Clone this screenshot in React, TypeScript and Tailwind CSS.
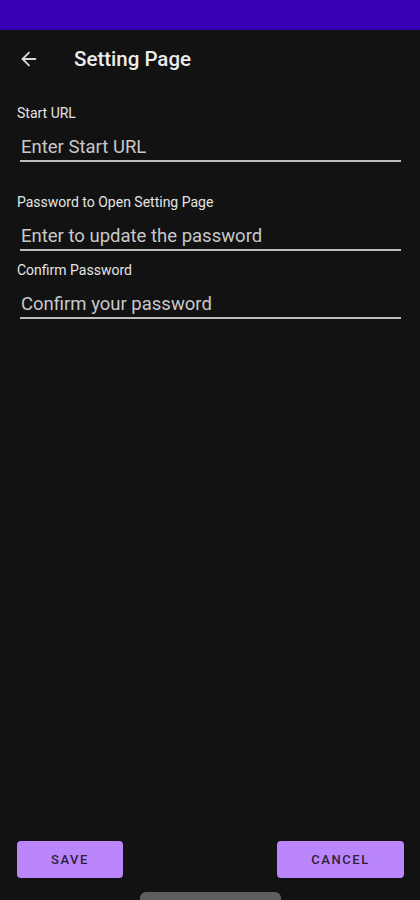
import React, { useState } from 'react'
import { ArrowLeft } from 'lucide-react'

type FieldProps = {
  label: string
  placeholder: string
  value: string
  onChange: (v: string) => void
  gapTop: string
  type?: string
}

const Field: React.FC<FieldProps> = ({ label, placeholder, value, onChange, gapTop, type = 'text' }) => {
  return (
    <div className={gapTop}>
      <div className="pl-[17px] text-[14px] leading-[16px] text-[#e4e4e4]">{label}</div>
      <input
        type={type}
        value={value}
        onChange={(e) => onChange(e.target.value)}
        placeholder={placeholder}
        className="mt-[14px] block h-[24px] w-[381px] ml-[20px] pl-[1px] bg-transparent text-[18.5px] leading-[24px] text-[#d6d6d6] placeholder:text-[#c9c9c9] outline-none"
      />
      <div className="ml-[20px] mt-[1px] h-[2px] w-[381px] bg-[#bdbdbd]" />
    </div>
  )
}

const App: React.FC = () => {
  const [startUrl, setStartUrl] = useState('')
  const [password, setPassword] = useState('')
  const [confirm, setConfirm] = useState('')

  return (
    <div
      className="flex h-[900px] w-[420px] flex-col overflow-hidden bg-[#121212]"
      style={{ fontFamily: 'Roboto, "Noto Sans", sans-serif' }}
    >
      {/* status bar */}
      <div className="h-[30px] shrink-0 bg-[#3700b3]" />

      {/* toolbar */}
      <div className="flex h-[58px] shrink-0 items-center">
        <button className="ml-[18px] text-[#d8d8d8]">
          <ArrowLeft className="h-[22px] w-[22px]" strokeWidth={2} />
        </button>
        <h1 className="ml-[34px] text-[20.5px] font-medium text-[#ececec]">Setting Page</h1>
      </div>

      {/* form */}
      <div className="shrink-0">
        <Field
          gapTop="mt-[17px]"
          label="Start URL"
          placeholder="Enter Start URL"
          value={startUrl}
          onChange={setStartUrl}
        />
        <Field
          gapTop="mt-[32px]"
          label="Password to Open Setting Page"
          placeholder="Enter to update the password"
          value={password}
          onChange={setPassword}
          type="password"
        />
        <Field
          gapTop="mt-[11px]"
          label="Confirm Password"
          placeholder="Confirm your password"
          value={confirm}
          onChange={setConfirm}
          type="password"
        />
      </div>

      <div className="flex-1" />

      {/* actions */}
      <div className="flex shrink-0 items-center justify-between pl-[17px] pr-[16px]">
        <button className="h-[37px] w-[106px] rounded-[4px] bg-[#bb86fc] text-[13px] font-medium tracking-[0.12em] text-[#2c2236]">
          SAVE
        </button>
        <button className="h-[37px] w-[127px] rounded-[4px] bg-[#bb86fc] text-[13px] font-medium tracking-[0.12em] text-[#2c2236]">
          CANCEL
        </button>
      </div>

      {/* home indicator */}
      <div className="mx-auto mt-[14px] h-[8px] w-[141px] shrink-0 rounded-t-[6px] bg-[#5e5e5e]" />
    </div>
  )
}

export default App
